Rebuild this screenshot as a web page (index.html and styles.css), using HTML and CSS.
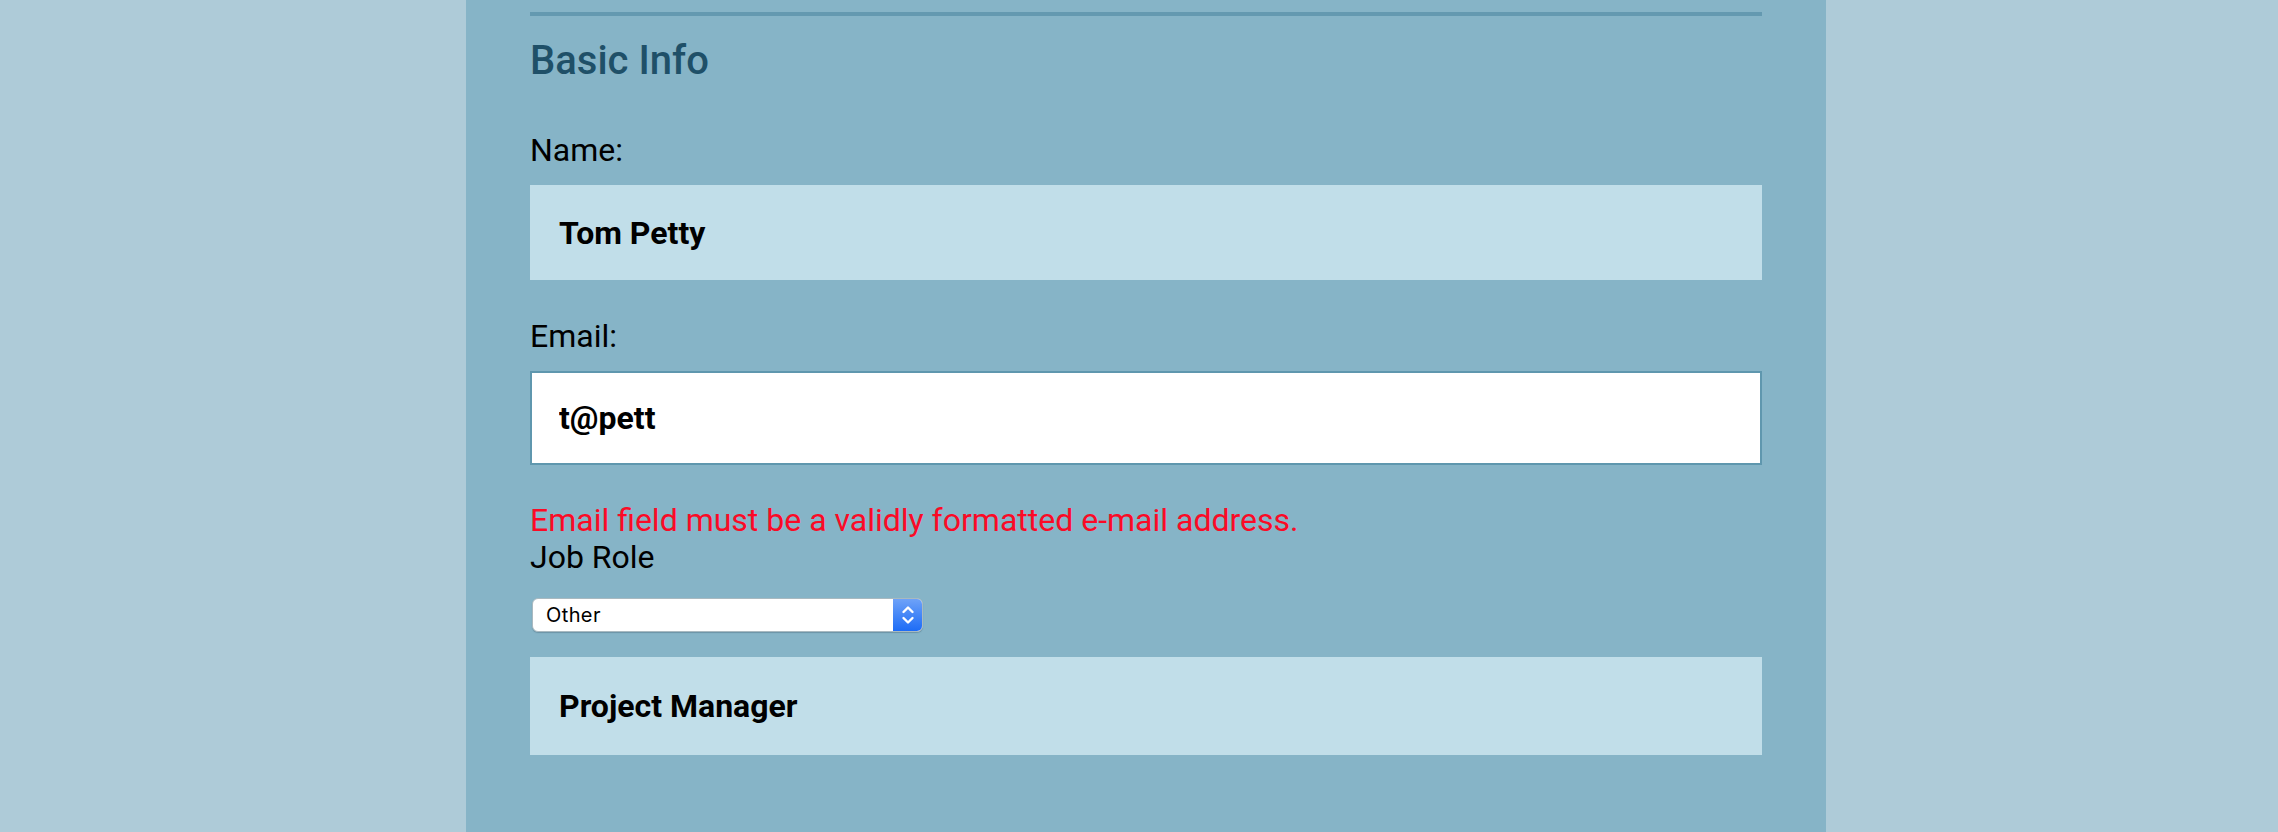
FILE: index.html
```html
<!DOCTYPE html>
<html lang="en">
<head>
<meta charset="utf-8">
<title>Basic Info</title>
<link rel="stylesheet" href="styles.css">
</head>
<body>
<main class="panel">
  <form class="form">
    <fieldset class="fieldset">
      <h2 class="legend">Basic Info</h2>

      <label class="label label-first" for="name">Name:</label>
      <input class="field field-filled" id="name" type="text" value="Tom Petty">

      <label class="label label-next" for="mail">Email:</label>
      <input class="field field-focus" id="mail" type="text" value="t@pett">

      <p class="error">Email field must be a validly formatted e-mail address.</p>
      <label class="label" for="title">Job Role</label>

      <div class="select">
        <select class="select-input" id="title">
          <option>Other</option>
        </select>
        <span class="select-arrow">
          <svg width="14" height="22" viewBox="0 0 14 22" fill="none" stroke="#fff" stroke-width="2.4" stroke-linecap="round" stroke-linejoin="round">
            <path d="M2.5 8 L7 3.5 L11.5 8"/>
            <path d="M2.5 14 L7 18.5 L11.5 14"/>
          </svg>
        </span>
      </div>

      <input class="field field-filled field-other" type="text" value="Project Manager">
    </fieldset>
  </form>
</main>
</body>
</html>
```

FILE: styles.css
```css
html, body {
  margin: 0;
  padding: 0;
}

body {
  background: #aecbd8;
  font-family: Roboto, "Liberation Sans", sans-serif;
  min-height: 832px;
}

.panel {
  width: 1360px;
  margin: 0 452px 0 466px;
  min-height: 832px;
  background: #86b4c7;
  box-sizing: border-box;
  padding: 12px 64px 0;
}

.form {
  margin: 0;
}

.fieldset {
  margin: 0;
  padding: 0;
  border: none;
  border-top: 4px solid #6499b0;
  display: flex;
  flex-direction: column;
  align-items: flex-start;
}

.legend {
  margin: 21px 0 0;
  font-size: 40px;
  line-height: 47px;
  font-weight: 500;
  color: #1f5068;
}

.label {
  display: block;
  font-size: 32px;
  line-height: 37px;
  color: #000;
}

.label-first {
  margin-top: 48px;
}

.label-next {
  margin-top: 38px;
}

.field {
  display: block;
  width: 100%;
  box-sizing: border-box;
  margin: 16px 0 0;
  font-family: Roboto, "Liberation Sans", sans-serif;
  font-size: 32px;
  font-weight: 700;
  color: #000;
  outline: none;
}

.field-filled {
  height: 95px;
  border: none;
  background: #c1dee9;
  padding: 0 29px;
}

.field-focus {
  height: 94px;
  border: 2px solid #5f97ae;
  background: #fff;
  padding: 0 27px;
}

.field-other {
  height: 98px;
  margin-top: 25px;
}

.error {
  margin: 37px 0 0;
  font-size: 32px;
  line-height: 37px;
  color: #fb0a26;
}

.select {
  margin: 22px 0 0 2px;
  width: 391px;
  height: 34px;
  box-sizing: border-box;
  display: flex;
  background: #fff;
  border: 1px solid #a9b9c0;
  border-radius: 6px;
  overflow: hidden;
  box-shadow: 0 1px 1px rgba(60, 90, 105, 0.35);
}

.select-input {
  flex: 1;
  min-width: 0;
  -webkit-appearance: none;
  appearance: none;
  border: none;
  background: transparent;
  padding: 0 0 0 13px;
  font-family: Inter, "Liberation Sans", sans-serif;
  font-size: 20px;
  letter-spacing: 0.4px;
  color: #000;
  outline: none;
}

.select-arrow {
  width: 29px;
  display: flex;
  align-items: center;
  justify-content: center;
  background: linear-gradient(to bottom, #6ea2f8, #1d6cf6);
}
```
